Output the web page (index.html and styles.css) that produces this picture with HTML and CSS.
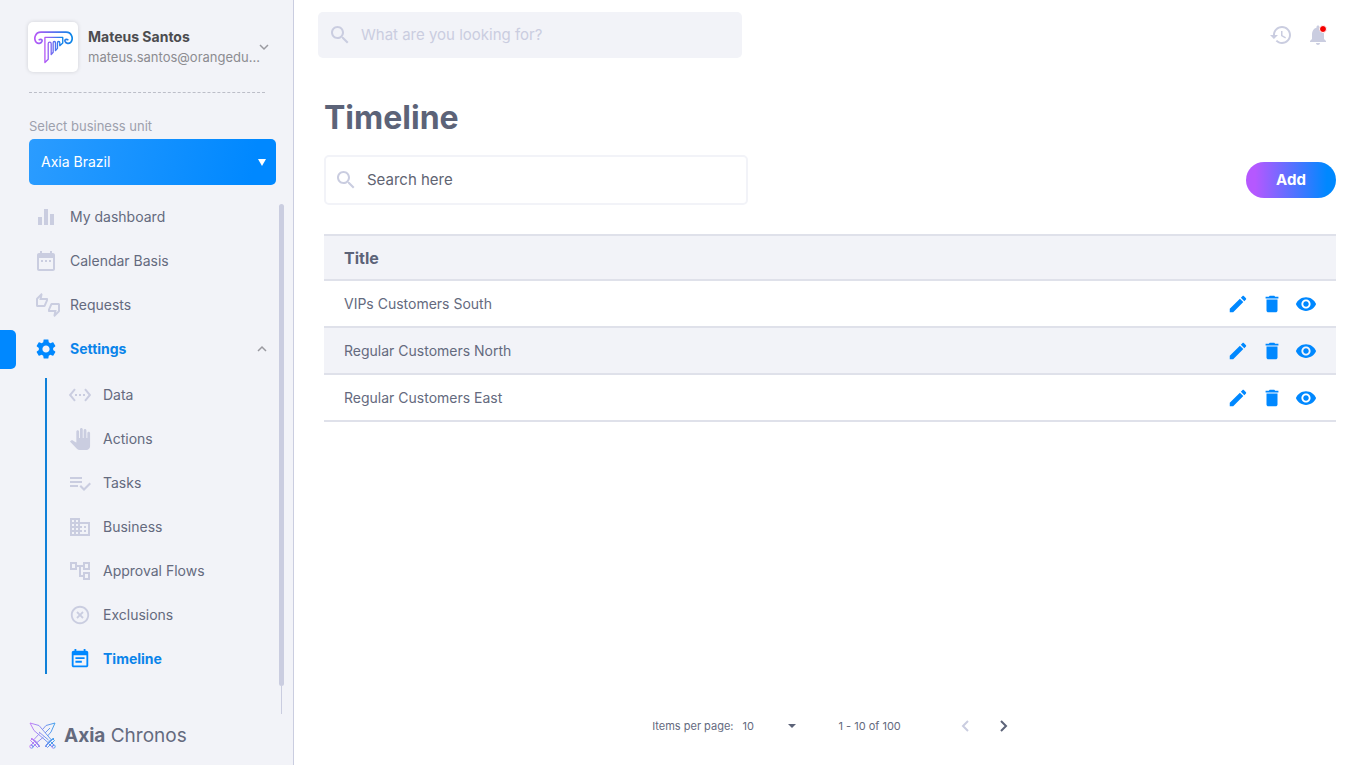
FILE: index.html
```html
<!DOCTYPE html>
<html lang="en">
<head>
<meta charset="utf-8">
<meta name="viewport" content="width=device-width, initial-scale=1">
<title>Axia Chronos - Timeline</title>
<link rel="stylesheet" href="styles.css">
</head>
<body>
<svg class="sprite" aria-hidden="true">
  <defs>
    <linearGradient id="brand" x1="0" y1="0" x2="1" y2="0"><stop offset="0" stop-color="#b558f6"/><stop offset="1" stop-color="#0a86e8"/></linearGradient>
    <symbol id="search" viewBox="0 0 24 24"><path d="M15.5 14h-.79l-.28-.27C15.41 12.59 16 11.11 16 9.5 16 5.91 13.09 3 9.5 3S3 5.91 3 9.5 5.91 16 9.5 16c1.61 0 3.09-.59 4.23-1.57l.27.28v.79l5 4.99L20.49 19l-4.99-5zm-6 0C7.01 14 5 11.99 5 9.5S7.01 5 9.5 5 14 7.01 14 9.5 11.99 14 9.5 14z"/></symbol>
    <symbol id="edit" viewBox="0 0 24 24"><path d="M3 17.25V21h3.75L17.81 9.94l-3.75-3.75L3 17.25zM20.71 7.04c.39-.39.39-1.02 0-1.41l-2.34-2.34c-.39-.39-1.02-.39-1.41 0l-1.83 1.83 3.75 3.75 1.83-1.83z"/></symbol>
    <symbol id="trash" viewBox="0 0 24 24"><path d="M6 19c0 1.1.9 2 2 2h8c1.1 0 2-.9 2-2V7H6v12zM19 4h-3.5l-1-1h-5l-1 1H5v2h14V4z"/></symbol>
    <symbol id="eye" viewBox="0 0 24 24"><path d="M12 4.500C7 4.500 2.730 7.610 1 12c1.730 4.390 6 7.500 11 7.500s9.270-3.110 11-7.500c-1.730-4.390-6-7.500-11-7.500zM12 17c-2.760 0-5-2.240-5-5s2.240-5 5-5 5 2.240 5 5-2.240 5-5 5zm0-8c-1.660 0-3 1.340-3 3s1.340 3 3 3 3-1.340 3-3-1.340-3-3-3z"/></symbol>
  </defs>
</svg>
<div class="app">
  <aside class="sidebar">
    <button class="profile" type="button">
      <span class="avatar">
        <svg class="logo" viewBox="100 90 118 102" fill="none" stroke="url(#brand)" stroke-width="5" stroke-linejoin="round" stroke-linecap="round" aria-hidden="true"><path d="M116 119c4-3 10 0 8 5-3 7-12 8-17 3-9-10-4-31 14-31h76c18 0 23 21 14 31-5 5-14 4-17-3-2-5 4-8 8-5"/><path stroke-width="4" d="M133 112h54v17l-9 8v-9c0-5-7-5-7 0v17l-6 7v-24c0-5-7-5-7 0v29l-6 7v-33c0-6-9-6-9 0v47l-10 10z"/></svg>
      </span>
      <span class="who"><strong class="name">Mateus Santos</strong><span class="mail">mateus.santos@orangedu...</span></span>
      <svg class="chevron" viewBox="0 0 10 10" aria-hidden="true"><path d="M1 3l4 4 4-4"/></svg>
    </button>
    <div class="divider"></div>
    <label class="unit-label" for="unit">Select business unit</label>
    <div class="unit">
      <select id="unit" class="unit-select"><option>Axia Brazil</option></select>
      <svg class="unit-arrow" viewBox="0 0 8 8" aria-hidden="true"><path d="M0 1h8L4 8z"/></svg>
    </div>
    <div class="nav-area">
      <nav class="nav">
        <a class="item" href="#"><svg class="icon" viewBox="0 0 24 24"><path d="M4 12h4v8H4zM10 4h4v16h-4zM16 9h4v11h-4z"/></svg>My dashboard</a>
        <a class="item" href="#"><svg class="icon" viewBox="0 0 24 24"><path d="M9 11H7v2h2v-2zm4 0h-2v2h2v-2zm4 0h-2v2h2v-2zm2-7h-1V2h-2v2H8V2H6v2H5c-1.110 0-1.990.9-1.990 2L3 20c0 1.100.89 2 2 2h14c1.100 0 2-.9 2-2V6c0-1.100-.9-2-2-2zm0 16H5V9h14v11z"/></svg>Calendar Basis</a>
        <a class="item" href="#"><svg class="icon wide" viewBox="0 0 24 24"><path d="M12 6c0-.55-.45-1-1-1H5.820l.66-3.180.02-.23c0-.31-.13-.59-.33-.8L5.380 0 .44 4.940C.17 5.210 0 5.590 0 6v6.500c0 .83.67 1.500 1.500 1.500h6.750c.62 0 1.150-.38 1.380-.91l2.260-5.290c.07-.17.11-.36.11-.55V6zm-2 1.130L7.920 12H2V6.210l1.930-1.930L3.360 7H10v.13zM22.500 10h-6.750c-.62 0-1.150.38-1.380.91l-2.260 5.290c-.07.17-.11.36-.11.55V18c0 .55.45 1 1 1h5.180l-.66 3.180-.02.24c0 .31.13.59.33.8l.79.78 4.940-4.940c.27-.27.44-.65.44-1.060v-6.500c0-.83-.67-1.500-1.500-1.500zm-.5 7.790l-1.930 1.930.57-2.720H14v-.13L16.080 12H22v5.790z"/></svg>Requests</a>
        <a class="item active open" href="#"><svg class="icon" viewBox="0 0 24 24"><path d="M19.140 12.940c.04-.3.06-.61.06-.94 0-.32-.02-.64-.07-.94l2.030-1.580c.18-.14.23-.41.12-.61l-1.920-3.320c-.12-.22-.37-.29-.59-.22l-2.390.96c-.5-.38-1.030-.7-1.620-.94l-.36-2.540c-.04-.24-.24-.41-.48-.41h-3.840c-.24 0-.43.17-.47.41l-.36 2.540c-.59.24-1.130.57-1.620.94l-2.390-.96c-.22-.08-.47 0-.59.22L2.740 8.870c-.12.21-.08.47.12.61l2.030 1.580c-.05.3-.09.63-.09.94s.02.64.07.94l-2.030 1.580c-.18.14-.23.41-.12.61l1.920 3.320c.12.22.37.29.59.22l2.390-.96c.5.38 1.030.7 1.620.94l.36 2.540c.05.24.24.41.48.41h3.840c.24 0 .44-.17.47-.41l.36-2.540c.59-.24 1.130-.56 1.620-.94l2.390.96c.22.08.47 0 .59-.22l1.920-3.320c.12-.22.07-.47-.12-.61l-2.010-1.580zM12 15.600c-1.980 0-3.600-1.620-3.600-3.600s1.620-3.600 3.600-3.600 3.600 1.620 3.600 3.600-1.620 3.600-3.600 3.600z"/></svg>Settings<svg class="chevron item-chevron" viewBox="0 0 10 10"><path d="M1 7l4-4 4 4"/></svg></a>
        <div class="subnav">
          <a class="sub" href="#"><svg class="icon" viewBox="0 0 24 24"><path d="M7.770 6.760L6.230 5.480.82 12l5.410 6.520 1.540-1.280L3.420 12l4.350-5.240zM7 13h2v-2H7v2zm10-2h-2v2h2v-2zm-6 2h2v-2h-2v2zm6.770-7.520l-1.540 1.280L20.580 12l-4.350 5.240 1.540 1.280L23.180 12l-5.410-6.520z"/></svg>Data</a>
          <a class="sub" href="#"><svg class="icon small" viewBox="0 0 24 24"><path d="M23 5.500V20c0 2.200-1.800 4-4 4h-7.300c-1.080 0-2.100-.43-2.850-1.190L1 14.830s1.260-1.230 1.300-1.250c.22-.19.49-.29.79-.29.22 0 .42.06.6.16.04.01 4.310 2.460 4.310 2.460V4c0-.83.67-1.500 1.500-1.500S11 3.170 11 4v7h1V1.500c0-.83.67-1.500 1.500-1.500S15 .67 15 1.500V11h1V2.500c0-.83.67-1.500 1.500-1.500s1.500.67 1.500 1.500V11h1V5.500c0-.83.67-1.500 1.500-1.500s1.500.67 1.500 1.500z"/></svg>Actions</a>
          <a class="sub" href="#"><svg class="icon" viewBox="0 0 24 24"><path d="M14 10H2v2h12v-2zm0-4H2v2h12V6zM2 16h8v-2H2v2zm19.500-4.500L23 13l-6.990 7-4.510-4.500L13 14l3.010 3 5.490-5.500z"/></svg>Tasks</a>
          <a class="sub" href="#"><svg class="icon" viewBox="0 0 24 24"><path d="M12 7V3H2v18h20V7H12zM6 19H4v-2h2v2zm0-4H4v-2h2v2zm0-4H4V9h2v2zm0-4H4V5h2v2zm4 12H8v-2h2v2zm0-4H8v-2h2v2zm0-4H8V9h2v2zm0-4H8V5h2v2zm10 12h-8v-2h2v-2h-2v-2h2v-2h-2V9h8v10zm-2-8h-2v2h2v-2zm0 4h-2v2h2v-2z"/></svg>Business</a>
          <a class="sub" href="#"><svg class="icon" viewBox="0 0 24 24"><path d="M22 11V3h-7v3H9V3H2v8h7V8h2v10h4v3h7v-8h-7v3h-2V8h2v3h7zM7 9H4V5h3v4zm10 6h3v4h-3v-4zm0-10h3v4h-3V5z"/></svg>Approval Flows</a>
          <a class="sub" href="#"><svg class="icon small" viewBox="0 0 24 24"><path d="M14.590 8L12 10.590 9.410 8 8 9.410 10.590 12 8 14.590 9.410 16 12 13.410 14.590 16 16 14.590 13.410 12 16 9.410 14.590 8zM12 2C6.470 2 2 6.470 2 12s4.470 10 10 10 10-4.470 10-10S17.530 2 12 2zm0 18c-4.410 0-8-3.590-8-8s3.590-8 8-8 8 3.590 8 8-3.590 8-8 8z"/></svg>Exclusions</a>
          <a class="sub active" href="#"><svg class="icon small" viewBox="0 0 24 24"><path d="M17 10H7v2h10v-2zm2-7h-1V1h-2v2H8V1H6v2H5c-1.110 0-1.990.9-1.990 2L3 19c0 1.100.89 2 2 2h14c1.100 0 2-.9 2-2V5c0-1.100-.9-2-2-2zm0 16H5V8h14v11zm-5-5H7v2h7v-2z"/></svg>Timeline</a>
        </div>
      </nav>
      <div class="scrollbar"><div class="thumb"></div><div class="track"></div></div>
    </div>
    <div class="brand">
      <svg class="swords" viewBox="0 0 27 27" fill="none" stroke="url(#brand)" stroke-width="1" stroke-linejoin="round" aria-hidden="true"><path d="M1 1l9 2.500 12 14-3 3L5 8.500zM10 10l9.500 8M26 1l-9 2.500-3.500 4M26 1l-4 9-3.500 4M21 6l-5 5M10.500 11.500L5 17.500l3 3 6.500-5.500M2 16l9 9M1.500 18.500l2-2 7 7-2 2zM5 20l-3 3 2 2 3-3M25 16l-9 9M25.500 18.500l-2-2-7 7 2 2zM22 20l3 3-2 2-3-3"/><circle cx="2.500" cy="24.500" r="1.700"/><circle cx="24.500" cy="24.500" r="1.700"/></svg>
      <span><b>Axia</b> Chronos</span>
    </div>
  </aside>
  <main class="main">
    <header class="topbar">
      <label class="field global"><svg class="icon"><use href="#search"/></svg><input class="input" type="search" placeholder="What are you looking for?" aria-label="Global search"></label>
      <div class="tools">
        <button class="tool" type="button" aria-label="History"><svg class="icon" viewBox="0 0 24 24"><path d="M13 3c-4.970 0-9 4.030-9 9H1l3.890 3.890.07.14L9 12H6c0-3.870 3.130-7 7-7s7 3.130 7 7-3.130 7-7 7c-1.930 0-3.680-.79-4.940-2.060l-1.420 1.420C8.270 19.990 10.510 21 13 21c4.970 0 9-4.030 9-9s-4.030-9-9-9zm-1 5v5l4.280 2.540.72-1.210-3.500-2.080V8H12z"/></svg></button>
        <button class="tool" type="button" aria-label="Notifications"><svg class="icon" viewBox="0 0 24 24"><path d="M12 22c1.100 0 2-.9 2-2h-4c0 1.100.89 2 2 2zm6-6v-5c0-3.070-1.640-5.640-4.500-6.320V4c0-.83-.67-1.500-1.500-1.500s-1.500.67-1.500 1.500v.68C7.630 5.360 6 7.920 6 11v5l-2 2v1h16v-1l-2-2z"/><circle class="alert" cx="17" cy="6" r="3.500"/></svg></button>
      </div>
    </header>
    <section class="content">
      <h1 class="title">Timeline</h1>
      <div class="toolbar">
        <label class="field local"><svg class="icon"><use href="#search"/></svg><input class="input" type="search" placeholder="Search here" aria-label="Search timelines"></label>
        <button class="add" type="button">Add</button>
      </div>
      <table class="table">
        <thead><tr><th colspan="2">Title</th></tr></thead>
        <tbody>
          <tr><td>VIPs Customers South</td><td><div class="actions"><button class="action" type="button" aria-label="Edit"><svg><use href="#edit"/></svg></button><button class="action" type="button" aria-label="Delete"><svg><use href="#trash"/></svg></button><button class="action" type="button" aria-label="View"><svg><use href="#eye"/></svg></button></div></td></tr>
          <tr><td>Regular Customers North</td><td><div class="actions"><button class="action" type="button" aria-label="Edit"><svg><use href="#edit"/></svg></button><button class="action" type="button" aria-label="Delete"><svg><use href="#trash"/></svg></button><button class="action" type="button" aria-label="View"><svg><use href="#eye"/></svg></button></div></td></tr>
          <tr><td>Regular Customers East</td><td><div class="actions"><button class="action" type="button" aria-label="Edit"><svg><use href="#edit"/></svg></button><button class="action" type="button" aria-label="Delete"><svg><use href="#trash"/></svg></button><button class="action" type="button" aria-label="View"><svg><use href="#eye"/></svg></button></div></td></tr>
        </tbody>
      </table>
    </section>
    <footer class="pager">
      <label for="size">Items per page:</label>
      <div class="size"><select id="size" class="size-select"><option>10</option></select><svg class="size-arrow" viewBox="0 0 8 4" aria-hidden="true"><path d="M0 0h8L4 4z"/></svg></div>
      <span class="range">1 - 10 of 100</span>
      <div class="pages">
        <button class="page" type="button" disabled aria-label="Previous page"><svg viewBox="0 0 8 12"><path d="M7 1L2 6l5 5"/></svg></button>
        <button class="page" type="button" aria-label="Next page"><svg viewBox="0 0 8 12"><path d="M1 1l5 5-5 5"/></svg></button>
      </div>
    </footer>
  </main>
</div>
</body>
</html>
```
FILE: styles.css
```css
* { box-sizing: border-box; }

body {
  margin: 0;
  font-family: Inter, "Open Sans", sans-serif;
  font-size: 14px;
  line-height: 20px;
  color: #646a7e;
  background: #fff;
}

button, input, select { font: inherit; color: inherit; border: 0; background: none; padding: 0; margin: 0; }
button { cursor: pointer; }
a { color: inherit; text-decoration: none; }
svg { display: block; flex: none; }

.sprite { position: absolute; width: 0; height: 0; }
.icon { width: 24px; height: 24px; fill: #cacde0; }
.app { display: flex; min-height: 100vh; }

/* Sidebar */
.sidebar {
  display: flex;
  flex-direction: column;
  flex: none;
  width: 294px;
  background: #f2f3f8;
  border-right: 1px solid #cacde0;
}

.profile { display: flex; align-items: center; gap: 10px; margin: 22px 24px 0 28px; text-align: left; }
.avatar {
  display: grid;
  place-items: center;
  width: 50px;
  height: 50px;
  background: #fff;
  border-radius: 5px;
  box-shadow: 0 0 4px rgba(0, 0, 0, .14);
}
.logo { width: 39px; height: 34px; }
.who { display: flex; flex-direction: column; flex: 1; min-width: 0; }
.name { color: #4c4c4f; font-weight: 700; }
.mail { color: #8c8c91; font-size: 13px; white-space: nowrap; }
.chevron { width: 10px; height: 10px; fill: none; stroke: #9a9aa0; stroke-width: 1.5; }

.divider { margin: 20px 28px 0 29px; border-top: 1px dashed #bcbec8; }
.unit-label { margin: 23px 17px 3px 29px; color: #9da0ad; font-size: 13px; }
.unit { display: grid; align-items: center; margin: 0 17px 0 29px; }
.unit-select {
  grid-area: 1 / 1;
  height: 46px;
  padding: 0 12px;
  color: #fff;
  border-radius: 5px;
  appearance: none;
  background: linear-gradient(100deg, #2b9cff, #0088ff 90%);
}
.unit-arrow { grid-area: 1 / 1; justify-self: end; margin-right: 10px; width: 8px; height: 8px; fill: #fff; pointer-events: none; }

.nav-area { display: flex; flex: 1; margin-top: 10px; }
.nav { flex: 1; }
.item { display: flex; align-items: center; height: 44px; padding-left: 34px; gap: 12px; }
.icon.wide { margin: 0 -2px 0 2px; }
.item.active, .sub.active { color: #0a84ea; font-weight: 700; }
.active .icon { fill: #0088ff; }
.open::before { content: ""; width: 16px; height: 39px; margin: 0 6px 0 -34px; background: #0088ff; border-radius: 0 5px 5px 0; }
.item-chevron { margin: 0 12px 0 auto; }

.subnav {
  display: flex;
  flex-direction: column;
  gap: 14px;
  margin: 7px 0 0 45px;
  padding: 2px 0 0 21px;
  border-left: 2px solid #1080d8;
}
.sub { display: flex; align-items: center; gap: 11px; height: 30px; }
.icon.small { width: 22px; height: 22px; margin: 0 1px; }

.scrollbar { display: flex; flex-direction: column; align-items: center; width: 5px; margin: 9px 9px 0 0; }
.thumb { flex: 482; width: 5px; background: #cacde0; border-radius: 3px; }
.track { flex: 28; width: 1px; background: #cacde0; }

.brand { display: flex; align-items: center; gap: 8px; margin: 8px 0 16px 29px; font-size: 19px; line-height: 27px; }
.swords { width: 27px; height: 27px; opacity: .75; }

/* Main column */
.main { display: flex; flex-direction: column; flex: 1; min-width: 0; }
.topbar { display: flex; justify-content: space-between; align-items: center; padding: 12px 36px 0 24px; }
.field { display: flex; align-items: center; gap: 9px; width: 424px; border-radius: 5px; font-size: 15px; }
.global { height: 46px; padding: 0 10px; background: #f2f3f8; }
.local { height: 50px; padding: 0 8px; border: 2px solid #f2f3f8; }
.input { flex: 1; min-width: 0; outline: 0; appearance: none; }
.input::placeholder { color: #cacde0; opacity: 1; }
.local .input::placeholder { color: #5f6472; }
.tools { display: flex; gap: 13px; }
.alert { fill: #f50000; stroke: #fff; stroke-width: 1; }

.content { flex: 1; padding: 40px 30px 0; }
.title { margin: 0 0 17px; font-size: 32px; line-height: 40px; font-weight: 700; color: #5c6378; }
.toolbar { display: flex; justify-content: space-between; align-items: center; margin-bottom: 29px; }
.add {
  width: 90px;
  height: 36px;
  color: #fff;
  font-size: 15px;
  font-weight: 700;
  border-radius: 18px;
  background: linear-gradient(90deg, #b558ff 10%, #0088ff 90%);
}

.table { width: 100%; border-collapse: separate; border-spacing: 0; }
.table th, .table td { height: 47px; padding: 0 19px 0 20px; text-align: left; border-bottom: 2px solid #dfe1ea; }
.table th { font-size: 16px; font-weight: 700; color: #5c6378; background: #f2f3f8; border-top: 2px solid #dfe1ea; }
.table tbody tr:nth-child(even) { background: #f2f3f8; }
.actions { display: flex; justify-content: flex-end; gap: 12px; }
.action svg { width: 22px; height: 22px; fill: #0088ff; }

.pager { display: flex; align-items: center; justify-content: center; height: 40px; margin-bottom: 19px; font-size: 11px; }
.size { display: grid; align-items: center; width: 54px; margin: 0 42px 0 9px; }
.size-select { grid-area: 1 / 1; appearance: none; }
.size-arrow { grid-area: 1 / 1; justify-self: end; width: 8px; height: 4px; fill: #5c6378; pointer-events: none; }
.range { margin-right: 60px; }
.pages { display: flex; gap: 31px; }
.page svg { width: 8px; height: 12px; fill: none; stroke: #5c6378; stroke-width: 2; }
.page:disabled svg { stroke: #cacde0; }
```
